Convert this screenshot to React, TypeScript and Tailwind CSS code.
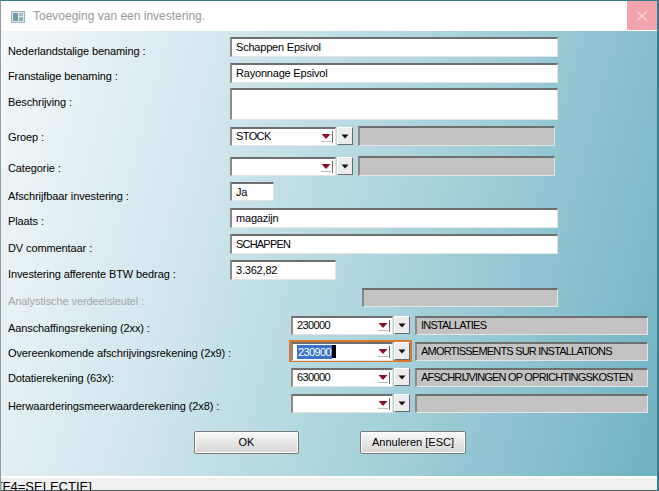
import React from "react";

const font = { fontFamily: "'Liberation Sans', Arial, sans-serif" };

function Box({ w, h, children, gray, caps }: { w: number; h: number; children?: React.ReactNode; gray?: boolean; caps?: boolean }) {
  return (
    <div
      className={`flex items-center pl-[4px] text-[11px] whitespace-nowrap overflow-hidden text-black border-t-2 border-l-2 border-t-[#6e6e6e] border-l-[#8a8a8a] border-r border-b border-r-[#e4e4e4] border-b-[#e4e4e4] ${gray ? "bg-[#c3c3c3]" : "bg-white"} ${caps ? "tracking-[-0.8px]" : "tracking-[-0.2px]"}`}
      style={{ width: w, height: h }}
    >
      {children}
    </div>
  );
}

function RedArrow() {
  return (
    <svg width="14" height="14" viewBox="0 0 14 14" className="shrink-0">
      <path d="M1.5 4 L10.5 4 L6 9 Z" fill="#8e1028" />
      <line x1="1" y1="11.5" x2="11" y2="11.5" stroke="#b8b8b8" strokeWidth="1" />
      <line x1="12.5" y1="1" x2="12.5" y2="13" stroke="#6a6a6a" strokeWidth="1" />
    </svg>
  );
}

function SmallBtn() {
  return (
    <div className="flex items-center justify-center w-[16px] h-[18px] bg-[#ececec] border border-t-white border-l-white border-r-[#6a6a6a] border-b-[#6a6a6a] shrink-0">
      <svg width="8" height="5" viewBox="0 0 8 5">
        <path d="M0.5 0.5 L7.5 0.5 L4 4.5 Z" fill="#111" />
      </svg>
    </div>
  );
}

function Combo({ w, value, selected }: { w: number; value?: string; selected?: boolean }) {
  return (
    <div className="flex items-center gap-[1px]">
      <div
        className="flex items-center justify-between pl-[4px] pr-[1px] bg-white text-[11px] tracking-[-0.6px] text-black border-t-2 border-l-2 border-t-[#6e6e6e] border-l-[#8a8a8a] border-r border-b border-r-[#e4e4e4] border-b-[#e4e4e4]"
        style={{ width: w, height: 19 }}
      >
        {selected ? (
          <span className="flex items-center h-[14px]">
            <span className="bg-[#3a74c8] text-white leading-[14px] px-[1px]">{value}</span>
            <span className="inline-block w-[4px] h-[13px] bg-black" />
          </span>
        ) : (
          <span>{value}</span>
        )}
        <RedArrow />
      </div>
      <SmallBtn />
    </div>
  );
}

function Label({ children, w, dim }: { children: React.ReactNode; w: number; dim?: boolean }) {
  return (
    <div className={`text-[11px] whitespace-nowrap tracking-[-0.1px] shrink-0 ${dim ? "text-[#a7a7a7]" : "text-black"}`} style={{ width: w }}>
      {children}
    </div>
  );
}

export default function App() {
  return (
    <div className="w-[659px] h-[491px] overflow-hidden relative bg-[#3d7d8d]" style={font}>
      <div className="absolute left-0 top-0 w-[657px] h-[491px] flex flex-col border-l border-l-[#8d9ea3] border-t border-t-[#3a7888]">
        {/* Title bar */}
        <div className="h-[30px] bg-white flex items-center shrink-0 relative">
          <svg width="14" height="12" viewBox="0 0 14 12" className="ml-[10px] mt-[1px]">
            <rect x="0.5" y="0.5" width="13" height="11" fill="#dfe7ea" stroke="#9fb2b8" />
            <rect x="2" y="2" width="5" height="8" fill="#6f9aa8" />
            <rect x="8" y="2" width="4" height="3" fill="#a9c0c7" />
            <rect x="8" y="6" width="4" height="4" fill="#8fb0ba" />
          </svg>
          <span className="ml-[8px] text-[12px] text-[#9a9a9a]">
            Toevoeging van een investering.
          </span>
          <div className="absolute right-[0px] top-0 w-[30px] h-[29px] bg-[#f2a3ab] flex items-center justify-center">
            <svg width="10" height="10" viewBox="0 0 10 10">
              <path d="M0.5 0.5 L9.5 9.5 M9.5 0.5 L0.5 9.5" stroke="#f6d2d6" strokeWidth="1.2" />
            </svg>
          </div>
        </div>

        {/* Body */}
        <div className="flex-1 flex flex-col pl-[7px] bg-[linear-gradient(105deg,#f2f7f9_0%,#d2e7ed_30%,#a7d1db_62%,#6fb2c2_100%)]">
          <div className="flex items-center mt-[5px] h-[21px]">
            <Label w={222}>
              <div className="mt-[9px]">Nederlandstalige benaming :</div>
            </Label>
            <Box w={328} h={20}>Schappen Epsivol</Box>
          </div>
          <div className="flex items-center mt-[5px] h-[21px]">
            <Label w={222}>
              <div className="mt-[8px]">Franstalige benaming :</div>
            </Label>
            <Box w={328} h={20}>Rayonnage Epsivol</Box>
          </div>
          <div className="flex items-start mt-[5px] h-[32px]">
            <Label w={222}>
              <div className="mt-[6px]">Beschrijving :</div>
            </Label>
            <Box w={328} h={32} />
          </div>
          <div className="flex items-center mt-[6px] h-[20px]">
            <Label w={222}>
              <div className="mt-[3px]">Groep :</div>
            </Label>
            <Combo w={106} value="STOCK" />
            <div className="ml-[5px]">
              <Box w={197} h={20} gray />
            </div>
          </div>
          <div className="flex items-center mt-[10px] h-[20px]">
            <Label w={222}>
              <div className="mt-[4px]">Categorie :</div>
            </Label>
            <Combo w={106} value="" />
            <div className="ml-[5px]">
              <Box w={197} h={20} gray />
            </div>
          </div>
          <div className="flex items-center mt-[6px] h-[19px]">
            <Label w={222}>
              <div className="mt-[9px]">Afschrijfbaar investering :</div>
            </Label>
            <Box w={44} h={19}>Ja</Box>
          </div>
          <div className="flex items-center mt-[7px] h-[20px]">
            <Label w={222}>
              <div className="mt-[6px]">Plaats :</div>
            </Label>
            <Box w={328} h={20}>magazijn</Box>
          </div>
          <div className="flex items-center mt-[6px] h-[20px]">
            <Label w={222}>
              <div className="mt-[9px]">DV commentaar :</div>
            </Label>
            <Box w={328} h={20} caps>SCHAPPEN</Box>
          </div>
          <div className="flex items-center mt-[6px] h-[20px]">
            <Label w={222}>
              <div className="mt-[9px]">Investering afferente BTW bedrag :</div>
            </Label>
            <Box w={106} h={20}>3.362,82</Box>
          </div>
          <div className="flex items-center mt-[8px] h-[19px]">
            <Label w={354} dim>
              <div className="mt-[7px]">Analystische verdeelsleutel :</div>
            </Label>
            <Box w={196} h={19} gray />
          </div>
          <div className="flex items-center mt-[8px] h-[20px]">
            <Label w={283}>
              <div className="mt-[7px]">Aanschaffingsrekening (2xx) :</div>
            </Label>
            <Combo w={102} value="230000" />
            <div className="ml-[5px]">
              <Box w={233} h={19} gray caps>INSTALLATIES</Box>
            </div>
          </div>
          <div className="flex items-center mt-[5px] h-[22px]">
            <Label w={281}>
              <div className="mt-[4px]">Overeenkomende afschrijvingsrekening (2x9) :</div>
            </Label>
            <div className="border-2 border-[#d9782b] h-[22px] flex items-center">
              <Combo w={102} value="230900" selected />
            </div>
            <div className="ml-[3px]">
              <Box w={233} h={19} gray caps>AMORTISSEMENTS SUR INSTALLATIONS</Box>
            </div>
          </div>
          <div className="flex items-center mt-[5px] h-[20px]">
            <Label w={283}>
              <div className="mt-[2px]">Dotatierekening (63x):</div>
            </Label>
            <Combo w={102} value="630000" />
            <div className="ml-[5px]">
              <Box w={233} h={19} gray caps>AFSCHRIJVINGEN OP OPRICHTINGSKOSTEN</Box>
            </div>
          </div>
          <div className="flex items-center mt-[6px] h-[20px]">
            <Label w={283}>
              <div className="mt-[7px]">Herwaarderingsmeerwaarderekening (2x8) :</div>
            </Label>
            <Combo w={102} value="" />
            <div className="ml-[5px]">
              <Box w={233} h={19} gray />
            </div>
          </div>
          <div className="flex mt-[18px] pl-[186px] gap-[61px]">
            <button className="w-[105px] h-[23px] text-[11px] text-black rounded-[2px] border border-[#7a7a7a] bg-[linear-gradient(#fafafa,#e6e6e6_50%,#d6d6d6)] shadow-[inset_0_0_0_1px_#fdfdfd]">
              OK
            </button>
            <button className="w-[106px] h-[23px] text-[11px] text-black rounded-[2px] border border-[#7a7a7a] bg-[linear-gradient(#fafafa,#e6e6e6_50%,#d6d6d6)] shadow-[inset_0_0_0_1px_#fdfdfd]">
              Annuleren [ESC]
            </button>
          </div>
        </div>

        {/* status */}
        <div className="h-[15px] shrink-0 bg-[#f0f0f0] border-t-2 border-t-white border-b border-b-[#4e5a5e] text-[13px] text-black overflow-hidden">
          <div className="ml-[-2px] mt-[1px] leading-[15px] whitespace-nowrap">[F4=SELECTIE]</div>
        </div>
      </div>
    </div>
  );
}
